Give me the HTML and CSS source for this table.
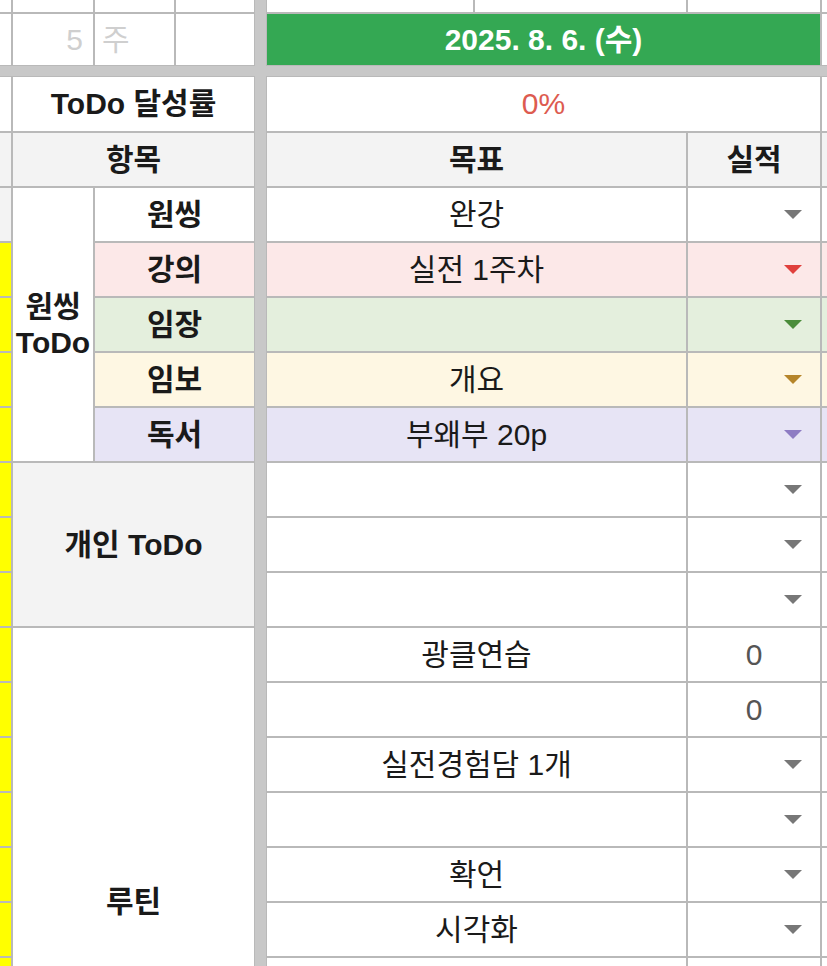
FILE: index.html
```html
<!DOCTYPE html>
<html lang="ko">
<head>
<meta charset="utf-8">
<link rel="stylesheet" href="styles.css">
</head>
<body>
<div class="sheet">
  <div class="freeze-col"></div>
  <div class="freeze-row"></div>

  <!-- row 1 (partial) -->
  <div class="c"></div><div class="c"></div><div class="c"></div><div class="c"></div>
  <div class="c split"><span class="half"></span><span class="half"></span></div>
  <div class="c"></div><div class="c"></div>

  <!-- row 2 -->
  <div class="c"></div>
  <div class="c right muted">5</div>
  <div class="c left muted">주</div>
  <div class="c"></div>
  <div class="c date span2">2025. 8. 6. (수)</div>
  <div class="c"></div>

  <!-- ToDo 달성률 -->
  <div class="c"></div>
  <div class="c b span3">ToDo 달성률</div>
  <div class="c pct span2">0%</div>
  <div class="c"></div>

  <!-- header -->
  <div class="c gray"></div>
  <div class="c gray b span3">항목</div>
  <div class="c gray b">목표</div>
  <div class="c gray b">실적</div>
  <div class="c gray"></div>

  <!-- 원씽 ToDo -->
  <div class="c gray"></div>
  <div class="c b rows5 stack"><span>원씽</span><span>ToDo</span></div>
  <div class="c b span2">원씽</div>
  <div class="c">완강</div>
  <div class="c dd-cell"><span class="dd"></span></div>
  <div class="c"></div>

  <div class="c yellow"></div>
  <div class="c b span2 pink">강의</div>
  <div class="c pink">실전 1주차</div>
  <div class="c pink dd-cell"><span class="dd red"></span></div>
  <div class="c pink"></div>

  <div class="c yellow"></div>
  <div class="c b span2 green">임장</div>
  <div class="c green"></div>
  <div class="c green dd-cell"><span class="dd dgreen"></span></div>
  <div class="c green"></div>

  <div class="c yellow"></div>
  <div class="c b span2 cream">임보</div>
  <div class="c cream">개요</div>
  <div class="c cream dd-cell"><span class="dd amber"></span></div>
  <div class="c cream"></div>

  <div class="c yellow"></div>
  <div class="c b span2 lav">독서</div>
  <div class="c lav">부왜부 20p</div>
  <div class="c lav dd-cell"><span class="dd purple"></span></div>
  <div class="c lav"></div>

  <!-- 개인 ToDo -->
  <div class="c yellow"></div>
  <div class="c b gray span3 rows3">개인 ToDo</div>
  <div class="c"></div>
  <div class="c dd-cell"><span class="dd"></span></div>
  <div class="c"></div>

  <div class="c yellow"></div>
  <div class="c"></div>
  <div class="c dd-cell"><span class="dd"></span></div>
  <div class="c"></div>

  <div class="c yellow"></div>
  <div class="c"></div>
  <div class="c dd-cell"><span class="dd"></span></div>
  <div class="c"></div>

  <!-- 루틴 -->
  <div class="c yellow"></div>
  <div class="c b span3 rows10">루틴</div>
  <div class="c">광클연습</div>
  <div class="c num">0</div>
  <div class="c"></div>

  <div class="c yellow"></div>
  <div class="c"></div>
  <div class="c num">0</div>
  <div class="c"></div>

  <div class="c yellow"></div>
  <div class="c">실전경험담 1개</div>
  <div class="c dd-cell"><span class="dd"></span></div>
  <div class="c"></div>

  <div class="c yellow"></div>
  <div class="c"></div>
  <div class="c dd-cell"><span class="dd"></span></div>
  <div class="c"></div>

  <div class="c yellow"></div>
  <div class="c">확언</div>
  <div class="c dd-cell"><span class="dd"></span></div>
  <div class="c"></div>

  <div class="c yellow"></div>
  <div class="c">시각화</div>
  <div class="c dd-cell"><span class="dd"></span></div>
  <div class="c"></div>

  <div class="c yellow"></div>
  <div class="c"></div>
  <div class="c"></div>
  <div class="c"></div>

  <div class="c yellow"></div>
  <div class="c"></div>
  <div class="c"></div>
  <div class="c"></div>
</div>
</body>
</html>
```

FILE: styles.css
```css
html, body {
  margin: 0;
  padding: 0;
  background: #ffffff;
}
body {
  width: 827px;
  height: 966px;
  overflow: hidden;
  font-family: "Liberation Sans", "Noto Sans CJK KR", sans-serif;
  font-size: 30px;
  color: #1a1a1a;
}
.sheet {
  display: grid;
  grid-template-columns: 11px 80px 79px 78px 9px 419px 132px 100px;
  grid-template-rows: 12px 51px 8px 54px repeat(19, 53px);
  gap: 2px;
  background: #b9b9b9;
  width: max-content;
}
.freeze-col {
  grid-column: 5;
  grid-row: 1 / -1;
  background: #c8c8c8;
  margin: 0 -1px;
}
.freeze-row {
  grid-column: 1 / -1;
  grid-row: 3;
  background: #c8c8c8;
  margin: -1px 0;
}
.c {
  background: #ffffff;
  display: flex;
  align-items: center;
  justify-content: center;
  line-height: 1;
  white-space: nowrap;
  overflow: hidden;
}
.b { font-weight: 700; }
.span2 { grid-column: span 2; }
.span3 { grid-column: span 3; }
.rows3 { grid-row: span 3; }
.rows5 { grid-row: span 5; }
.rows10 { grid-row: span 10; }
.right { justify-content: flex-end; padding-right: 10px; }
.left { justify-content: flex-start; padding-left: 7px; }
.muted { color: #cfcfcf; }
.split {
  background: #b9b9b9;
  display: flex;
  gap: 2px;
}
.half {
  flex: 1;
  align-self: stretch;
  background: #ffffff;
}
.split .half:first-child { flex: 0 0 206px; }
.date {
  background: #34a853;
  color: #ffffff;
  font-weight: 700;
}
.pct { color: #dd5b50; }
.gray { background: #f3f3f3; }
.yellow { background: #ffff00; }
.pink { background: #fce8e8; }
.green { background: #e4efdd; }
.cream { background: #fef7e3; }
.lav { background: #e7e4f5; }
.stack {
  flex-direction: column;
  gap: 6px;
}
.stack span { display: block; }
.num { color: #555555; }
.dd-cell {
  justify-content: flex-end;
  padding-right: 18px;
}
.dd {
  width: 0;
  height: 0;
  border-left: 9px solid transparent;
  border-right: 9px solid transparent;
  border-top: 9px solid #777777;
}
.dd.red { border-top-color: #e0403c; }
.dd.dgreen { border-top-color: #4a8c3a; }
.dd.amber { border-top-color: #b5852a; }
.dd.purple { border-top-color: #8e7cc3; }
```
